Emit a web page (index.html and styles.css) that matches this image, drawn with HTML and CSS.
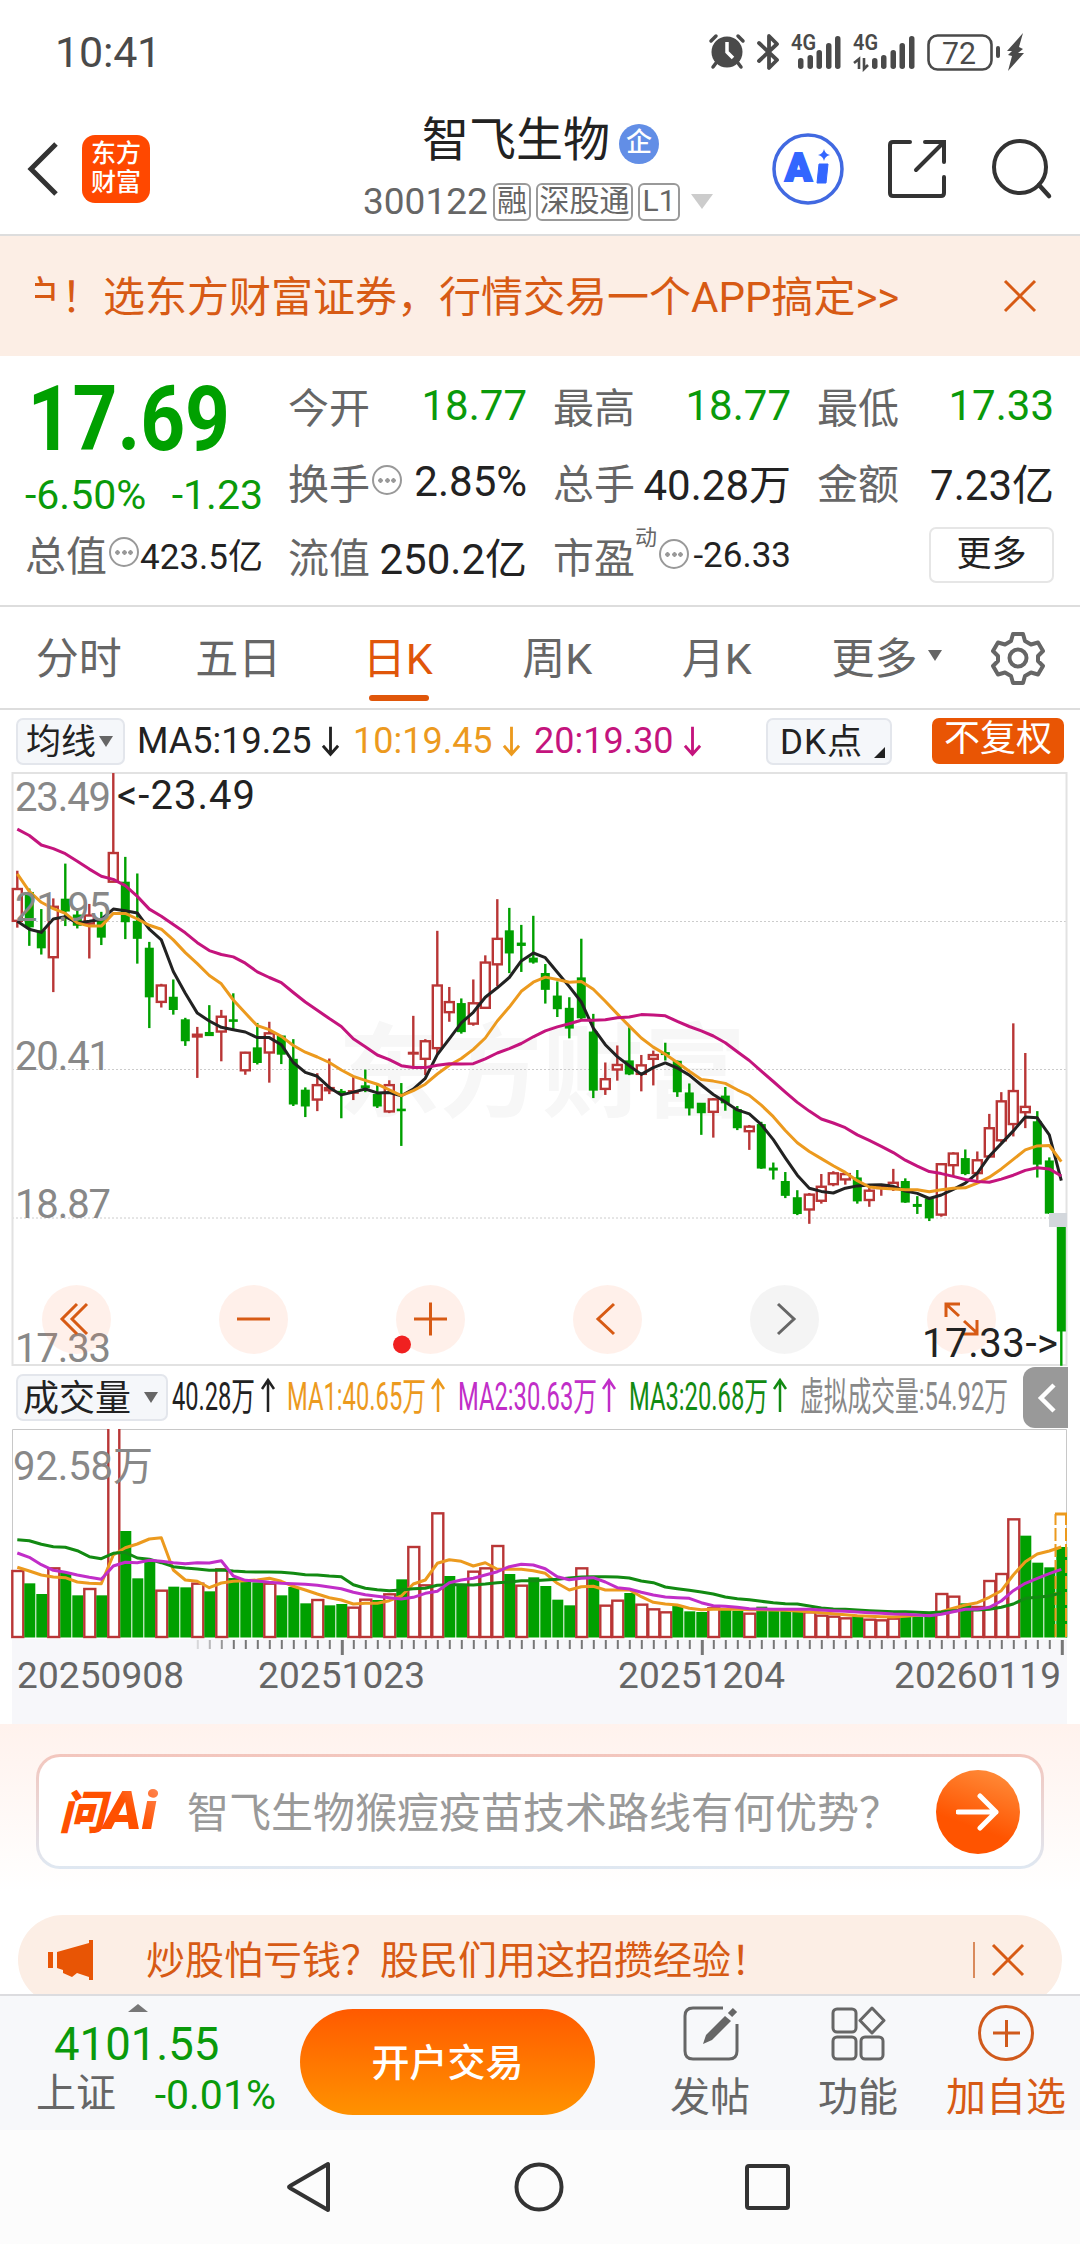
FILE: index.html
```html
<!DOCTYPE html>
<html lang="zh-CN">
<head>
    <meta charset="utf-8">
    <title>智飞生物 300122</title>
    <link rel="stylesheet" href="styles.css">
</head>
<body>
    <div class="status-bar">
        <span class="time">10:41</span>
        <svg class="status-icons" width="320" height="40" viewBox="0 0 320 40">
            <g fill="#4a4a4a">
                <circle cx="22" cy="20" r="15.500"/>
                <path d="M11 31l-3 4M33 31l3 4M6 9l5-5M38 9l-5-5" stroke="#4a4a4a" stroke-width="3.500" stroke-linecap="round"/>
                <path d="M22 10v10l6 6" fill="none" stroke="#fff" stroke-width="3.500"/>
                <path d="M54 11l18 17-8 8V4l8 8-18 17" fill="none" stroke="#4a4a4a" stroke-width="3.800" stroke-linejoin="round" stroke-linecap="round"/>
                <text x="86" y="18" font-size="22" font-weight="600" textLength="25" lengthAdjust="spacingAndGlyphs">4G</text>
                <rect x="93" y="26" width="5.500" height="11" rx="2.700"/>
                <rect x="102.500" y="23" width="5.500" height="14" rx="2.700"/>
                <rect x="111.500" y="18" width="5.500" height="19" rx="2.700"/>
                <rect x="121" y="11" width="5.500" height="26" rx="2.700"/>
                <rect x="130" y="4" width="5.500" height="33" rx="2.700"/>
                <text x="148" y="18" font-size="22" font-weight="600" textLength="25" lengthAdjust="spacingAndGlyphs">4G</text>
                <path d="M149 31l5-4v10M163 33l-4 4V26" fill="none" stroke="#4a4a4a" stroke-width="2.600"/>
                <rect x="167" y="26" width="5.500" height="11" rx="2.700"/>
                <rect x="176" y="23" width="5.500" height="14" rx="2.700"/>
                <rect x="185.500" y="18" width="5.500" height="19" rx="2.700"/>
                <rect x="194.500" y="11" width="5.500" height="26" rx="2.700"/>
                <rect x="204" y="4" width="5.500" height="33" rx="2.700"/>
                <rect x="223.500" y="3.500" width="63" height="34" rx="9" fill="none" stroke="#4a4a4a" stroke-width="2.600"/>
                <text x="237" y="31.500" font-size="31" textLength="34" lengthAdjust="spacingAndGlyphs">72</text>
                <rect x="291" y="14" width="4" height="12" rx="2"/>
                <path d="M318 1l-16 18h5l-4 4 4 1-4 15 16-18h-6l5-4-4-2z"/>
            </g>
        </svg>
    </div>

    <header class="header">
        <svg class="back" width="34" height="56" viewBox="0 0 34 56"><path d="M30 3L5 28l25 25" fill="none" stroke="#333" stroke-width="5"/></svg>
        <div class="logo"><span>东方</span><span>财富</span></div>
        <div class="stock">
            <div class="stock-name"><span>智飞生物</span><span class="badge">企</span></div>
            <div class="stock-code">
                <span class="code">300122</span>
                <span class="tag">融</span><span class="tag tag-wide">深股通</span><span class="tag tag-l1">L1</span>
                <i class="tri tri-light"></i>
            </div>
        </div>
        <svg class="ai" width="74" height="74" viewBox="0 0 74 74">
            <circle cx="37" cy="37" r="34" fill="none" stroke="#4169e1" stroke-width="3.500"/>
            <text x="14" y="49" font-size="39" font-weight="900" fill="#3366ff" stroke="#3366ff" stroke-width="2" textLength="27" lengthAdjust="spacingAndGlyphs">A</text>
            <path d="M48 32h9l-2 19h-9z" fill="#3366ff" stroke="#3366ff" stroke-linejoin="round"/>
            <path d="M53 17q1 5 6 6-5 1-6 6-1-5-6-6 5-1 6-6z" fill="#3366ff"/>
        </svg>
        <svg class="share" width="62" height="62" viewBox="0 0 62 62">
            <path d="M24 4H7q-3 0-3 3v48q0 3 3 3h48q3 0 3-3V39M39 4h19v20M57 5L30 32" fill="none" stroke="#333" stroke-width="4" stroke-linecap="round"/>
        </svg>
        <svg class="search" width="64" height="64" viewBox="0 0 64 64">
            <circle cx="30" cy="30" r="26" fill="none" stroke="#333" stroke-width="4"/>
            <path d="M49 48l10 11" stroke="#333" stroke-width="4.500" stroke-linecap="round"/>
        </svg>
    </header>

    <div class="banner">
        <div class="banner-text">户！选东方财富证券，行情交易一个APP搞定&gt;&gt;</div>
        <svg width="36" height="36" viewBox="0 0 36 36"><path d="M3 3l30 30M33 3L3 33" stroke="#d75a14" stroke-width="3"/></svg>
    </div>

    <div class="quote">
        <div class="price-col">
            <div class="price">17.69</div>
            <div class="change"><span>-6.50%</span><span>-1.23</span></div>
            <div class="cell"><span class="label">总值<i class="dots"></i></span><span class="value small">423.5亿</span></div>
        </div>
        <div class="grid">
            <div class="cell"><span class="label">今开</span><span class="value down">18.77</span></div>
            <div class="cell"><span class="label">最高</span><span class="value down">18.77</span></div>
            <div class="cell"><span class="label">最低</span><span class="value down">17.33</span></div>
            <div class="cell"><span class="label">换手<i class="dots"></i></span><span class="value">2.85%</span></div>
            <div class="cell"><span class="label">总手</span><span class="value">40.28万</span></div>
            <div class="cell"><span class="label">金额</span><span class="value">7.23亿</span></div>
            <div class="cell"><span class="label">流值</span><span class="value">250.2亿</span></div>
            <div class="cell"><span class="label">市盈<sup>动</sup><i class="dots"></i></span><span class="value small">-26.33</span></div>
            <div class="cell cell-end"><button class="more">更多</button></div>
        </div>
    </div>

    <nav class="tabs">
        <span class="tab">分时</span>
        <span class="tab">五日</span>
        <span class="tab active">日K</span>
        <span class="tab">周K</span>
        <span class="tab">月K</span>
        <span class="tab-more">更多<i class="tri"></i></span>
        <svg width="54" height="54" viewBox="0 0 54 54" fill="none" stroke="#666" stroke-width="4" stroke-linejoin="round">
            <path d="M22 3h10l2 7 6 3.500 7-2 5 8.500-5 5v5l5 5-5 8.500-7-2-6 3.500-2 7H22l-2-7-6-3.500-7 2-5-8.500 5-5v-5l-5-5 5-8.500 7 2 6-3.500z"/>
            <circle cx="27" cy="27" r="8.500"/>
        </svg>
    </nav>

    <div class="ma-row">
        <span class="select"><b>均线</b><i class="tri"></i></span>
        <span class="ma ma5">MA5:19.25<svg class="arrow" viewBox="0 0 20 32"><path d="M10 1v29M2 21l8 9 8-9"/></svg></span>
        <span class="ma ma10">10:19.45<svg class="arrow" viewBox="0 0 20 32"><path d="M10 1v29M2 21l8 9 8-9"/></svg></span>
        <span class="ma ma20">20:19.30<svg class="arrow" viewBox="0 0 20 32"><path d="M10 1v29M2 21l8 9 8-9"/></svg></span>
        <span class="select dk"><b>DK点</b><i class="corner"></i></span>
        <span class="adjust">不复权</span>
    </div>

    <svg class="chart" id="kline" width="1080" height="594" viewBox="0 0 1080 594">
        <text class="watermark" x="338" y="337" textLength="408">东方财富</text>
        <path d="M12 149.500h1055M12 297.500h1055M12 446h1055" stroke="#ccc" stroke-dasharray="2 2"/>
        <rect x="12.500" y="1" width="1054" height="592" fill="none" stroke="#e2e2e2" stroke-width="2"/>
        <g id="candles"></g>
        <rect x="1049" y="441" width="18" height="14" fill="#d3d7dc"/>
        <g id="maLines" class="lines"></g>
        <g class="axis">
            <text x="15" y="39" textLength="96">23.49</text>
            <text x="15" y="149" textLength="96">21.95</text>
            <text x="15" y="298" textLength="96">20.41</text>
            <text x="15" y="446" textLength="96">18.87</text>
            <text x="15" y="590" textLength="96">17.33</text>
        </g>
        <text class="mark" x="117" y="37" textLength="138">&lt;-23.49</text>
        <g class="tools">
            <circle cx="76.500" cy="547.500" r="34.500"/>
            <circle cx="253.500" cy="547.500" r="34.500"/>
            <circle cx="430.500" cy="547.500" r="34.500"/>
            <circle cx="607.500" cy="547.500" r="34.500"/>
            <circle cx="784.500" cy="547.500" r="34.500" class="off"/>
            <circle cx="961.500" cy="547.500" r="34.500"/>
            <path d="M77 532L62 547l15 15M87 532L72 547l15 15"/>
            <path d="M237 547h33M414 547h33M430.500 530.500v33"/>
            <path d="M614 532l-16 15 16 15"/>
            <path d="M778 532l16 15-16 15" class="off-line"/>
            <path d="M946 545v-13h14M947 533l12 11M964 549l12 11M977 548v14h-14"/>
            <circle cx="402" cy="572.500" r="9" class="dot"/>
        </g>
        <text class="mark" x="922" y="585" textLength="136">17.33-&gt;</text>
    </svg>

    <div class="vol-row">
        <span class="select vol-select"><b>成交量</b><i class="tri"></i></span>
        <svg class="vol-values" width="840" height="50" viewBox="0 0 840 50">
            <g font-size="39">
                <text x="2" y="37" fill="#222" textLength="83" lengthAdjust="spacingAndGlyphs">40.28万</text>
                <text x="117" y="37" fill="#ec9a1e" textLength="139" lengthAdjust="spacingAndGlyphs">MA1:40.65万</text>
                <text x="288" y="37" fill="#c12ec8" textLength="139" lengthAdjust="spacingAndGlyphs">MA2:30.63万</text>
                <text x="459" y="37" fill="#128a12" textLength="139" lengthAdjust="spacingAndGlyphs">MA3:20.68万</text>
                <text x="630" y="37" fill="#888" textLength="208" lengthAdjust="spacingAndGlyphs">虚拟成交量:54.92万</text>
            </g>
            <g fill="none" stroke-width="2.500">
                <path d="M98 39V7M92 16l6-9 6 9" stroke="#222"/>
                <path d="M268 39V7M262 16l6-9 6 9" stroke="#ec9a1e"/>
                <path d="M439 39V7M433 16l6-9 6 9" stroke="#c12ec8"/>
                <path d="M610 39V7M604 16l6-9 6 9" stroke="#128a12"/>
            </g>
        </svg>
        <span class="collapse"><svg width="20" height="30" viewBox="0 0 20 30"><path d="M17 2L4 15l13 13" fill="none" stroke="#fff" stroke-width="4.500"/></svg></span>
    </div>

    <svg class="chart" id="volume" width="1080" height="295" viewBox="0 0 1080 295">
        <rect x="12" y="210" width="1055" height="85" fill="#f7f7fa"/>
        <path d="M12.500 209V.5h1054V209" fill="none" stroke="#c8c8c8"/>
        <g id="bars"></g>
        <path d="M1055.500 208V85M1066 208V85" fill="none" stroke="#ec9a1e" stroke-width="2" stroke-dasharray="13 3"/>
        <path d="M1055 85h12" stroke="#ec9a1e" stroke-width="3"/>
        <g id="volLines" class="lines"></g>
        <text class="axis" x="13" y="51" textLength="140">92.58万</text>
        <g id="ticks"></g>
        <g class="dates">
            <text x="17" y="259" textLength="167">20250908</text>
            <text x="258" y="259" textLength="167">20251023</text>
            <text x="618" y="259" textLength="167">20251204</text>
            <text x="894" y="259" textLength="167">20260119</text>
        </g>
    </svg>

    <div class="ask">
        <div class="ask-box">
            <svg class="ask-logo" width="104" height="50" viewBox="0 0 104 50">
                <defs>
                    <linearGradient id="ai" x1="0" y1="1" x2="1" y2="0">
                        <stop offset="0.5" stop-color="#ff5000"/>
                        <stop offset="1" stop-color="#ff9060"/>
                    </linearGradient>
                </defs>
                <text x="0" y="42" font-size="46" fill="#ff5000">问</text>
                <text x="45" y="42" font-size="53" fill="url(#ai)" textLength="53" lengthAdjust="spacingAndGlyphs">Ai</text>
            </svg>
            <span class="ask-text">智飞生物猴痘疫苗技术路线有何优势？</span>
            <span class="go"><svg width="44" height="40" viewBox="0 0 44 40"><path d="M2 20h38M24 4l16 16-16 16" fill="none" stroke="#fff" stroke-width="5" stroke-linecap="round" stroke-linejoin="round"/></svg></span>
        </div>
    </div>

    <div class="promo-wrap">
        <div class="promo">
            <svg width="46" height="42" viewBox="0 0 46 42" fill="#e85505"><path d="M0 13h5v16H0zM9 13L41 4V1h4v40h-4v-3l-12-4-5 4-9-4v-3l-6-2z"/></svg>
            <span class="promo-text">炒股怕亏钱？股民们用这招攒经验！</span>
            <i class="bar"></i>
            <svg width="34" height="34" viewBox="0 0 34 34"><path d="M2 2l30 30M32 2L2 32" stroke="#d75a14" stroke-width="3"/></svg>
        </div>
    </div>

    <footer class="bottom">
        <div class="index">
            <i class="up"></i>
            <div class="index-value">4101.55</div>
            <div class="index-row"><span class="index-name">上证</span><span class="index-change">-0.01%</span></div>
        </div>
        <button class="open">开户交易</button>
        <div class="action">
            <svg width="58" height="58" viewBox="0 0 58 58" fill="none" stroke="#666" stroke-width="3"><path d="M42 4H12q-8 0-8 8v35q0 8 8 8h36q8 0 8-8V20"/><path d="M22 40l3-9 19-19 6 5-19 19z" fill="#666" stroke="none"/><path d="M49 11l5-5" stroke-width="6"/></svg>
            <span>发帖</span>
        </div>
        <div class="action">
            <svg width="58" height="58" viewBox="0 0 58 58" fill="none" stroke="#666" stroke-width="3"><rect x="4" y="5" width="23" height="23" rx="4"/><rect x="4" y="33" width="23" height="22" rx="4"/><rect x="32" y="33" width="22" height="22" rx="4"/><path d="M43 4l12 12.500-12 12.500-12-12.500z" stroke-linejoin="round"/></svg>
            <span>功能</span>
        </div>
        <div class="action add">
            <svg width="58" height="58" viewBox="0 0 58 58" fill="none" stroke="#d05a1c" stroke-width="3"><circle cx="29" cy="29" r="26.500"/><path d="M16 29h27M29.500 16v27"/></svg>
            <span>加自选</span>
        </div>
    </footer>

    <div class="system-nav">
        <svg width="46" height="54" viewBox="0 0 46 54"><path d="M42 4v46L4 28q-2-1 0-2z" fill="none" stroke="#333" stroke-width="4" stroke-linejoin="round"/></svg>
        <svg width="52" height="52" viewBox="0 0 52 52"><circle cx="26" cy="26" r="22.500" fill="none" stroke="#333" stroke-width="4"/></svg>
        <svg width="48" height="48" viewBox="0 0 48 48"><rect x="4" y="3" width="41" height="42" rx="2" fill="none" stroke="#333" stroke-width="4"/></svg>
    </div>

    <script src="chart.js"></script>
</body>
</html>
```

FILE: styles.css
```css
* {
    box-sizing: border-box;
}

body {
    margin: 0;
    width: 1080px;
    height: 2244px;
    overflow: hidden;
    background: #fff;
    color: #222;
    font-family: Roboto, "Noto Sans CJK SC", sans-serif;
}

svg {
    display: block;
    flex: none;
}

i {
    flex: none;
    font-style: normal;
}

b {
    font-weight: 400;
}

/* status bar */
.status-bar {
    display: flex;
    align-items: center;
    height: 103px;
    padding-left: 55px;
    color: #4a4a4a;
}

.time {
    width: 650px;
    font-size: 43px;
    letter-spacing: -0.2px;
}

/* header */
.header {
    display: flex;
    align-items: center;
    height: 133px;
    border-bottom: 2px solid #ddd;
}

.back {
    margin-left: 26px;
}

.logo {
    display: flex;
    flex-direction: column;
    justify-content: center;
    width: 68px;
    height: 68px;
    margin-left: 22px;
    padding-bottom: 2px;
    border-radius: 13px;
    background: #ff4800;
    color: #fff;
    font-size: 25px;
    font-weight: 500;
    line-height: 29px;
    text-align: center;
}

.stock {
    width: 350px;
    margin-left: 213px;
}

.stock-name {
    display: flex;
    align-items: center;
    padding: 0 0 6px 59px;
    height: 66px;
    font-size: 47px;
    line-height: 60px;
}

.stock-name span:first-child {
    position: relative;
    top: -1px;
}

.badge {
    width: 40px;
    height: 40px;
    margin: 7px 0 0 9px;
    border-radius: 50%;
    background: #628ee6;
    color: #fff;
    font-size: 26px;
    font-weight: 500;
    line-height: 37px;
    text-align: center;
}

.stock-code {
    display: flex;
    align-items: center;
    height: 50px;
    color: #666;
}

.code {
    width: 130px;
    font-size: 37px;
}

.tag {
    width: 38px;
    height: 38px;
    margin-right: 5px;
    border: 2px solid #999;
    border-radius: 6px;
    font-size: 30px;
    line-height: 32px;
    text-align: center;
}

.tag-wide {
    width: 97px;
}

.tag-l1 {
    width: 42px;
}

.tri {
    border: 7px solid transparent;
    border-top: 11px solid #666;
    border-bottom: 0;
}

.tri-light {
    margin-left: 6px;
    border-width: 15px 11px 0;
    border-top-color: #ccc;
}

.ai {
    margin-left: 58px;
}

.share {
    margin-left: 41px;
}

.search {
    margin-left: 42px;
}

/* banner */
.banner {
    display: flex;
    align-items: center;
    height: 120px;
    padding-left: 35px;
    background: #fceee5;
    color: #d75a14;
}

.banner-text {
    width: 967px;
    padding-bottom: 6px;
    overflow: hidden;
    white-space: nowrap;
    font-size: 42px;
    text-indent: -16px;
}

/* quote */
.quote {
    display: flex;
    height: 249px;
    padding: 12px 25px 0 25px;
}

.price-col {
    width: 238px;
    margin-right: 25px;
    color: #0a9a0a;
}

.price {
    height: 102px;
    font-size: 90px;
    font-weight: 700;
    line-height: 104px;
    transform: scaleX(0.87);
    transform-origin: left;
    padding-left: 3px;
    color: #00a000;
}

.change {
    display: flex;
    justify-content: space-between;
    height: 48px;
    font-size: 41px;
    line-height: 51px;
}

.grid {
    display: grid;
    grid-template-columns: 239px 238px 237px;
    grid-template-rows: 76px 74px 76px;
    column-gap: 26px;
    flex: 1;
    margin-top: -1px;
}

.cell {
    display: flex;
    align-items: center;
    justify-content: space-between;
    height: 76px;
    white-space: nowrap;
}

.price-col .cell {
    margin-top: -3px;
}

.cell-end {
    justify-content: flex-end;
}

.label {
    display: flex;
    align-items: center;
    color: #666;
    font-size: 41px;
}

.label sup {
    align-self: flex-start;
    margin-top: 2px;
    font-size: 22px;
    line-height: 22px;
}

.value {
    color: #222;
    font-size: 42px;
}

.value.down {
    color: #0a9a0a;
}

.value.small {
    font-size: 35px;
}

.dots {
    width: 30px;
    height: 30px;
    margin: 0 0 2px 2px;
    border: 2px solid #999;
    border-radius: 50%;
    background: radial-gradient(circle, #999 2px, transparent 2.5px) center / 7px 7px no-repeat,
        radial-gradient(circle, #999 2px, transparent 2.5px) 3px center / 7px 7px no-repeat,
        radial-gradient(circle, #999 2px, transparent 2.5px) 16px center / 7px 7px no-repeat;
}

.more {
    width: 125px;
    height: 56px;
    padding: 0;
    border: 2px solid #e6e6e6;
    border-radius: 7px;
    background: #fff;
    color: #222;
    font: inherit;
    font-size: 35px;
    line-height: 46px;
}

/* tabs */
.tabs {
    display: flex;
    align-items: center;
    height: 105px;
    border-top: 2px solid #ddd;
    border-bottom: 2px solid #ddd;
    color: #666;
    font-size: 43px;
}

.tab {
    position: relative;
    width: 159.5px;
    margin-left: -1px;
    padding-bottom: 6px;
    text-align: center;
}

.tab + .tab {
    margin-left: 0;
}

.active {
    color: #e0560a;
}

.active::after {
    content: "";
    position: absolute;
    left: 51px;
    bottom: -9px;
    width: 60px;
    height: 6px;
    border-radius: 3px;
    background: #e0560a;
}

.tab-more {
    display: flex;
    align-items: center;
    gap: 10px;
    width: 159px;
    margin-left: 35px;
    padding-bottom: 5px;
}

/* ma row */
.ma-row {
    display: flex;
    align-items: center;
    height: 62px;
    padding-left: 16px;
    font-size: 36px;
}

.select {
    display: flex;
    align-items: center;
    width: 109px;
    height: 47px;
    padding-left: 8px;
    border: 2px solid #e3e6ec;
    border-radius: 7px;
    background: #f5f7fa;
    font-size: 35px;
}

.select b {
    margin-top: -6px;
}

.select .tri {
    margin-left: 3px;
}

.ma {
    display: flex;
    align-items: center;
}

.arrow {
    width: 19px;
    height: 32px;
    margin-left: 9px;
    fill: none;
    stroke: currentColor;
    stroke-width: 3;
}

.ma5 {
    width: 216px;
    margin-left: 12px;
}

.ma10 {
    width: 181px;
    color: #ec9a1e;
}

.ma20 {
    width: 232px;
    color: #c4147d;
}

.dk {
    position: relative;
    width: 126px;
    padding-left: 12px;
    letter-spacing: 1px;
}

.corner {
    position: absolute;
    right: 5px;
    bottom: 5px;
    border-left: 11px solid transparent;
    border-bottom: 11px solid #222;
}

.adjust {
    width: 132px;
    height: 46px;
    margin-left: 40px;
    border-radius: 7px;
    background: #e95504;
    color: #fff;
    font-size: 36px;
    line-height: 42px;
    text-align: center;
}

/* charts */
.watermark {
    fill: #f7f7f7;
    font-size: 102px;
    font-weight: 700;
}

.axis {
    fill: #888;
    font-size: 40px;
}

.mark {
    fill: #222;
    font-size: 40px;
}

.dates {
    fill: #666;
    font-size: 37px;
}

.lines {
    fill: none;
    stroke-width: 3;
    stroke-linejoin: round;
}

.tools circle {
    fill: #ff7a3c;
    fill-opacity: 0.11;
}

.tools circle.off {
    fill: #999;
}

.tools circle.dot {
    fill: #f02020;
    fill-opacity: 1;
}

.tools path {
    fill: none;
    stroke: #d75a14;
    stroke-width: 3;
}

.tools .off-line {
    stroke: #666;
}

.vol-row {
    display: flex;
    align-items: center;
    height: 63px;
    padding-left: 16px;
}

.vol-select {
    width: 152px;
    padding-left: 5px;
    font-size: 36px;
}

.vol-select .tri {
    margin-left: 13px;
}

.vol-values {
    margin-left: 2px;
}

.collapse {
    display: flex;
    align-items: center;
    width: 45px;
    height: 61px;
    margin-left: 13px;
    padding-left: 14px;
    border-radius: 12px 0 0 12px;
    background: #999;
}

/* ask */
.ask {
    height: 191px;
    padding: 30px 36px 0;
    background: linear-gradient(#fff2ed, #fff 88%);
}

.ask-box {
    display: flex;
    align-items: center;
    height: 115px;
    padding-left: 20px;
    border: 3px solid transparent;
    border-radius: 24px;
    background: linear-gradient(#fff, #fff) padding-box, linear-gradient(#f3c6bd, #dfe8f2) border-box;
}

.ask-logo {
    margin-right: 24px;
    font-style: italic;
    font-weight: 900;
}

.ask-text {
    width: 749px;
    padding-bottom: 5px;
    color: #999;
    font-size: 42px;
    white-space: nowrap;
}

.go {
    display: flex;
    align-items: center;
    justify-content: center;
    width: 84px;
    height: 84px;
    border-radius: 50%;
    background: linear-gradient(200deg, #ff9240, #ff5400 65%);
}

/* promo */
.promo-wrap {
    height: 79px;
    padding: 0 18px;
    overflow: hidden;
}

.promo {
    display: flex;
    align-items: center;
    height: 90px;
    padding-left: 30px;
    border-radius: 45px;
    background: #fceee5;
    color: #d75a14;
}

.promo-text {
    width: 827px;
    margin-left: 52px;
    padding-bottom: 6px;
    font-size: 39px;
}

.bar {
    width: 2px;
    height: 36px;
    margin: 0 16px 0 0;
    background: #d98a5c;
}

/* bottom bar */
.bottom {
    display: flex;
    height: 136px;
    border-top: 2px solid #dcdcdf;
    background: #f7f8fa;
}

.index {
    width: 300px;
    padding-left: 36px;
    color: #0a9a0a;
}

.up {
    display: block;
    width: 0;
    margin: 8px 0 0 92px;
    border: 10px solid transparent;
    border-top: 0;
    border-bottom: 8px solid #777;
}

.index-value {
    margin: 6px 0 0 18px;
    font-size: 45.5px;
    line-height: 54px;
}

.index-row {
    display: flex;
    justify-content: space-between;
    width: 240px;
    font-size: 40px;
    line-height: 44px;
}

.index-change {
    font-size: 41px;
    line-height: 47px;
}

.index-name {
    color: #666;
}

.open {
    width: 295px;
    height: 106px;
    margin: 13px 41px 0 0;
    padding: 0 0 5px;
    border: 0;
    border-radius: 53px;
    background: linear-gradient(#ff5a00, #ff9200);
    color: #fff;
    font: inherit;
    font-size: 38px;
    font-weight: 500;
}

.action {
    display: flex;
    flex-direction: column;
    align-items: center;
    width: 148px;
    padding-top: 8px;
    color: #666;
    font-size: 40px;
    line-height: 58px;
}

.action span {
    margin-top: 7px;
}

.add {
    color: #d75a14;
}

/* system nav */
.system-nav {
    display: flex;
    align-items: center;
    height: 114px;
    padding-left: 286px;
    background: #fcfcfc;
}

.system-nav svg {
    margin-right: 181px;
}

.system-nav svg + svg {
    margin-right: 178px;
}
```

FILE: chart.js
```js
// [up, high, body top, body bottom, low], one row per trading day
var candles = [
    [1,280,325,408,424],[0,325,335,422,470],[0,377,432,475,492],[1,350,370,500,587],[0,262,352,382,420],
    [0,380,392,418,426],[1,364,392,415,502],[0,384,405,448,468],[1,33,234,309,309],[0,245,309,409,453],
    [0,287,408,451,515],[0,460,476,599,678],[1,566,569,613,626],[0,555,600,631,644],[0,652,657,710,723],
    [1,675,693,701,804],[0,620,689,697,697],[1,632,648,688,762],[0,590,657,661,682],[1,738,739,786,796],
    [0,665,728,765,770],[1,662,690,741,816],[0,697,698,744,769],[0,706,757,870,875],[0,828,835,875,903],
    [1,792,821,860,888],[1,755,828,837,845],[0,832,838,842,906],[1,800,836,843,860],[0,783,824,829,840],
    [0,820,846,875,880],[1,810,821,890,893],[0,817,883,887,976],[1,647,739,744,775],[1,706,710,757,797],
    [1,432,569,730,745],[1,574,611,639,662],[0,603,616,687,692],[1,555,614,668,672],[1,494,511,628,628],
    [1,352,451,518,572],[0,374,432,488,539],[0,417,463,469,536],[0,394,501,511,515],[0,516,540,580,616],
    [0,560,597,629,650],[0,600,628,678,704],[0,452,551,652,657],[0,642,688,835,855],[1,765,806,833,847],
    [1,722,770,784,811],[0,676,761,794,797],[1,746,771,795,838],[1,735,745,757,823],[0,715,740,745,760],
    [0,760,762,839,852],[0,818,842,880,899],[0,868,868,892,948],[1,855,857,891,955],[0,827,850,867,887],
    [0,875,884,930,936],[1,923,926,940,986],[0,915,922,1032,1034],[0,1018,1032,1037,1061],[0,1042,1066,1101,1108],
    [0,1088,1107,1147,1151],[1,1095,1098,1138,1173],[1,1047,1078,1116,1122],[1,1040,1044,1074,1078],[1,1042,1046,1062,1074],
    [0,1037,1057,1115,1122],[1,1075,1088,1114,1130],[1,1075,1078,1084,1102],[1,1034,1068,1082,1090],[0,1058,1066,1118,1120],
    [0,1103,1124,1129,1148],[0,1108,1110,1158,1166],[1,1020,1021,1151,1155],[1,992,994,1026,1052],[0,985,1008,1046,1050],
    [1,990,1011,1046,1062],[1,895,930,1004,1006],[1,840,862,963,967],[1,666,836,922,952],[1,741,876,892,931],
    [0,888,915,1022,1056],[0,1005,1014,1146,1148],[0,1182,1182,1444,1532]
];

var ma5 = [408,428,436,402,396,412,408,403,377,381,387,428,455,535,590,640,660,676,682,688,702,702,720,765,790,800,828,847,840,
    832,842,841,849,832,805,745,705,665,638,600,576,550,508,488,500,537,573,612,678,720,750,773,795,778,766,779,797,822,846,
    865,885,895,922,960,1006,1050,1083,1091,1095,1083,1077,1075,1074,1078,1090,1096,1109,1100,1086,1070,1045,1002,970,938,903,905,948,1064];
var ma10 = [288,332,360,376,388,412,420,420,388,388,402,418,428,455,487,515,545,566,607,640,672,682,699,722,739,751,765,784,800,
    810,820,834,849,836,820,794,772,755,732,703,660,625,585,562,549,555,562,560,580,610,642,673,703,726,744,765,787,808,812,
    818,834,848,873,902,937,968,990,1008,1026,1043,1064,1080,1083,1085,1087,1087,1092,1087,1083,1082,1070,1055,1034,1010,986,976,975,1016];
var ma20 = [175,191,215,224,237,256,276,294,302,318,345,377,395,416,437,462,482,492,498,514,536,550,563,588,612,633,654,674,705,
    725,746,758,773,778,778,772,768,769,768,756,741,730,717,700,685,675,667,658,658,657,652,650,644,645,647,661,674,685,698,
    715,738,760,787,813,840,866,888,908,918,930,948,962,977,993,1012,1027,1041,1046,1053,1061,1066,1068,1060,1050,1038,1031,1034,1052];

// bar tops, negative = down day
var volumes = [630,-670,-702,622,-637,-706,684,-706,200,-513,-655,-605,689,-680,-682,668,-694,625,-654,-662,-667,668,
    -706,-681,-730,717,-736,-732,740,716,-720,700,-658,558,673,457,-648,-674,632,622,555,-642,674,-652,
    -678,-719,-736,622,-650,734,719,-699,731,745,754,-736,-754,-756,742,-748,-752,758,-740,-750,-752,-755,
    754,764,767,772,-766,776,778,773,-770,-770,-768,699,707,-730,738,660,639,475,-527,-608,-622,-561];
var vol1 = [622,633,645,651,653,666,670,671,585,563,552,537,533,630,660,664,683,669,664,662,660,655,664,679,690,702,713,720,732,
    730,730,722,708,672,660,610,599,604,618,608,628,628,628,632,640,670,690,680,679,690,690,689,710,727,732,735,745,749,748,
    748,748,749,749,750,751,753,755,758,761,764,767,769,770,771,769,766,762,755,745,735,728,712,692,645,605,582,573,561];
var vol2 = [579,592,614,631,637,645,652,658,618,607,608,601,604,608,611,608,609,602,648,661,663,667,670,671,673,676,681,686,697,
    704,709,713,717,712,700,694,668,660,655,645,635,620,613,615,626,650,659,655,653,666,683,687,697,705,711,713,715,728,737,
    739,742,746,747,748,748,748,748,750,752,754,756,758,760,762,763,765,767,763,755,748,748,742,723,692,670,655,641,628];
var vol3 = [539,542,553,560,562,572,590,596,580,577,594,598,608,620,624,627,631,630,633,635,636,636,637,640,644,645,648,650,674,
    685,689,692,690,686,685,676,674,674,675,672,668,666,662,662,660,658,654,651,650,650,651,654,663,668,681,686,691,696,702,
    711,716,719,724,728,731,732,738,744,747,748,750,752,754,755,755,757,758,756,752,750,750,748,742,732,715,712,708,698];

var RED = '#b93636', GREEN = '#00a000';

function x(i) {
    return 17.3 + i * 12;
}

function priceY(v) {
    return v / 2.529 - 12;
}

function volY(v) {
    return v / 3 - 69;
}

function rect(left, top, w, h, color, hollow) {
    if (hollow) {
        return '<rect x="' + (left + 1) + '" y="' + (top + 1) + '" width="' + (w - 2) + '" height="' + Math.max(h - 2, 1) +
            '" fill="#fff" stroke="' + color + '" stroke-width="2.4"/>';
    }
    return '<rect x="' + left + '" y="' + top + '" width="' + w + '" height="' + h + '" fill="' + color + '"/>';
}

function line(data, y, color) {
    var pts = data.map(function (v, i) { return x(i) + ',' + y(v).toFixed(1); });
    return '<polyline points="' + pts.join(' ') + '" stroke="' + color + '"/>';
}

document.getElementById('candles').innerHTML = candles.map(function (c, i) {
    var color = c[0] ? RED : GREEN;
    var top = priceY(c[2]), bottom = priceY(c[3]);
    var wick = rect(x(i) - 1.2, priceY(c[1]), 2.4, priceY(c[4]) - priceY(c[1]), color);
    var w = c[0] ? 11 : 9;
    return wick + rect(x(i) - w / 2, top - 0.5, w, Math.max(bottom - top + 1, 2), color, c[0] && bottom - top > 4);
}).join('');

document.getElementById('maLines').innerHTML =
    line(ma5, priceY, '#222') + line(ma10, priceY, '#ec9a1e') + line(ma20, priceY, '#c4147d');

document.getElementById('bars').innerHTML = volumes.map(function (v, i) {
    var top = Math.max(volY(Math.abs(v)), 0);
    if (v > 0) {
        return rect(x(i) - 6, v === 200 ? -3 : top, 13, v === 200 ? 212 : 209 - top, RED, true);
    }
    return rect(x(i) - 5, top, 11, 208.5 - top, GREEN);
}).join('');

document.getElementById('volLines').innerHTML =
    line(vol1, volY, '#ec9a1e') + line(vol3, volY, '#128a12') + line(vol2, volY, '#c12ec8');

var ticks = '';
for (var i = 15; i < 88; i++) {
    var big = i % 30 === 27;
    ticks += '<rect x="' + (x(i) - 0.5) + '" y="211" width="' + (big ? 3 : 2) + '" height="' + (big ? 15 : 9) +
        '" fill="#777" opacity="' + Math.min((i - 14) * 0.25, 1) + '"/>';
}
document.getElementById('ticks').innerHTML = ticks;
```
